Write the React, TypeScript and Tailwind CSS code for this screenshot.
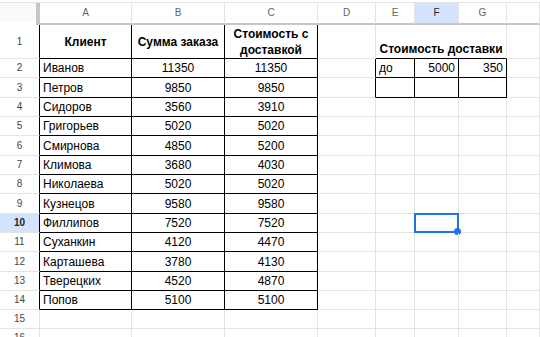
import React from 'react';

const GRID = 'border-[#e2e3e3]';

const colWidths = ['w-[40px]', 'w-[92px]', 'w-[93px]', 'w-[93px]', 'w-[58px]', 'w-[39px]', 'w-[44px]', 'w-[48px]', 'flex-1'];
const letters = ['', 'A', 'B', 'C', 'D', 'E', 'F', 'G', ''];

// rows 2..16
const rowHeights = ['h-[19px]', 'h-[20px]', 'h-[19px]', 'h-[19px]', 'h-[20px]', 'h-[19px]', 'h-[19px]', 'h-[20px]', 'h-[19px]', 'h-[19px]', 'h-[20px]', 'h-[19px]', 'h-[19px]', 'h-[19px]', 'h-[19px]'];

const clients: [string, number, number][] = [
  ['Иванов', 11350, 11350],
  ['Петров', 9850, 9850],
  ['Сидоров', 3560, 3910],
  ['Григорьев', 5020, 5020],
  ['Смирнова', 4850, 5200],
  ['Климова', 3680, 4030],
  ['Николаева', 5020, 5020],
  ['Кузнецов', 9580, 9580],
  ['Филлипов', 7520, 7520],
  ['Суханкин', 4120, 4470],
  ['Карташева', 3780, 4130],
  ['Тверецких', 4520, 4870],
  ['Попов', 5100, 5100],
];

function Cell({
  w,
  r = false,
  b = false,
  wrap = false,
  className = '',
  children,
}: {
  w: string;
  r?: boolean;
  b?: boolean;
  wrap?: boolean;
  className?: string;
  children?: React.ReactNode;
}) {
  return (
    <div
      className={`${w} shrink-0 h-full border-r border-b ${r ? 'border-r-black' : 'border-r-[#e2e3e3]'} ${
        b ? 'border-b-black' : 'border-b-[#e2e3e3]'
      } flex items-center overflow-visible ${wrap ? 'whitespace-normal' : 'whitespace-nowrap'} ${className}`}
    >
      {children}
    </div>
  );
}

export default function App() {
  return (
    <div className="w-[540px] h-[337px] overflow-hidden bg-white text-black font-['Liberation_Sans',Arial,sans-serif] text-[12px] leading-none">
      <div className="h-[3px] border-b border-[#e2e3e3]" />

      {/* column headers */}
      <div className="flex h-[22px]">
        <div className="w-[40px] shrink-0 h-full flex">
          <div className="w-[36px] h-[19px] bg-[#f8f9fa]" />
          <div className="w-[4px] h-full bg-[#c4c7c5]" />
        </div>
        {letters.slice(1).map((l, i) => (
          <div
            key={i}
            className={`${colWidths[i + 1]} shrink-0 h-full border-r ${GRID} border-b-[2px] border-b-[#c4c7c5] ${
              l === 'F' ? 'bg-[#d3e3fd] text-[#1f1f1f]' : 'text-[#5f6368]'
            } flex items-center justify-center text-[10px]`}
          >
            {l}
          </div>
        ))}
      </div>

      {/* row 1 */}
      <div className="flex h-[34px]">
        <Cell w={colWidths[0]} r className="justify-center text-[10px] text-[#444746]">1</Cell>
        <Cell w={colWidths[1]} r b className="justify-center font-bold">Клиент</Cell>
        <Cell w={colWidths[2]} r b className="justify-center font-bold">Сумма заказа</Cell>
        <Cell w={colWidths[3]} r b wrap className="justify-center font-bold text-center leading-[16px] px-[4px]">
          Стоимость с доставкой
        </Cell>
        <Cell w={colWidths[4]} />
        <Cell w="w-[131px]" b className="justify-center items-end pb-[3px] font-bold">
          Стоимость доставки
        </Cell>
        <Cell w={colWidths[8]} />
      </div>

      {/* rows 2..16 */}
      {rowHeights.map((h, idx) => {
        const n = idx + 2;
        const c = clients[idx];
        const inTable = !!c;
        const inDelivery = n === 2 || n === 3;
        return (
          <div key={n} className={`flex ${h}`}>
            <Cell
              w={colWidths[0]}
              r={inTable}
              className={`justify-center text-[10px] ${n === 10 ? 'bg-[#d3e3fd] text-[#1f1f1f] font-bold' : 'text-[#444746]'}`}
            >
              {n}
            </Cell>
            <Cell w={colWidths[1]} r={inTable} b={inTable} className="pl-[3px]">
              {c ? c[0] : ''}
            </Cell>
            <Cell w={colWidths[2]} r={inTable} b={inTable} className="justify-center">
              {c ? c[1] : ''}
            </Cell>
            <Cell w={colWidths[3]} r={inTable} b={inTable} className="justify-center">
              {c ? c[2] : ''}
            </Cell>
            <Cell w={colWidths[4]} r={inDelivery} />
            <Cell w={colWidths[5]} r={inDelivery} b={inDelivery} className="pl-[3px]">
              {n === 2 ? 'до' : ''}
            </Cell>
            <Cell w={colWidths[6]} r={inDelivery} b={inDelivery} className="justify-end pr-[3px] relative">
              {n === 2 ? '5000' : ''}
              {n === 10 && (
                <div className="absolute -left-px -top-px w-[45px] h-[20px] border-2 border-[#1a73e8]">
                  <div className="absolute -right-[4px] -bottom-[4px] w-[7px] h-[7px] rounded-full bg-[#1a73e8]" />
                </div>
              )}
            </Cell>
            <Cell w={colWidths[7]} r={inDelivery} b={inDelivery} className="justify-end pr-[3px]">
              {n === 2 ? '350' : ''}
            </Cell>
            <Cell w={colWidths[8]} />
          </div>
        );
      })}
    </div>
  );
}
